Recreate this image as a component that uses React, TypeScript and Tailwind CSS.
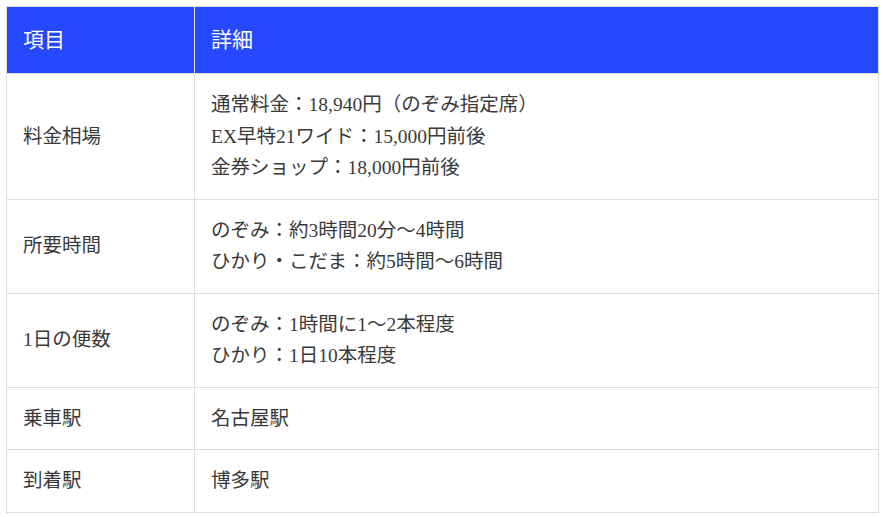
import React from "react";

const rows: { k: string; v: string[] }[] = [
  { k: "料金相場", v: ["通常料金：18,940円（のぞみ指定席）", "EX早特21ワイド：15,000円前後", "金券ショップ：18,000円前後"] },
  { k: "所要時間", v: ["のぞみ：約3時間20分〜4時間", "ひかり・こだま：約5時間〜6時間"] },
  { k: "1日の便数", v: ["のぞみ：1時間に1〜2本程度", "ひかり：1日10本程度"] },
  { k: "乗車駅", v: ["名古屋駅"] },
  { k: "到着駅", v: ["博多駅"] },
];

export default function App() {
  return (
    <div className="p-[6px] bg-white min-h-[517px]" style={{ fontFamily: '"Liberation Serif", "Noto Sans CJK JP", serif' }}>
      <table className="w-[873px] border-collapse text-[#3a3a3a]">
        <thead>
          <tr className="bg-[#2649ff] text-white text-left">
            <th className="w-[188px] border border-[#dddddd] px-4 py-[15px] text-[21px] leading-[36px] font-normal">項目</th>
            <th className="border border-[#dddddd] px-4 py-[15px] text-[21px] leading-[36px] font-normal">詳細</th>
          </tr>
        </thead>
        <tbody>
          {rows.map((r) => (
            <tr key={r.k}>
              <td className="border border-[#dddddd] px-4 py-[15px] text-[19.5px] leading-[31.5px] align-middle">{r.k}</td>
              <td className="border border-[#dddddd] px-4 py-[15px] text-[19.5px] leading-[31.5px] align-middle">
                {r.v.map((l, i) => (
                  <div key={i}>{l}</div>
                ))}
              </td>
            </tr>
          ))}
        </tbody>
      </table>
    </div>
  );
}
